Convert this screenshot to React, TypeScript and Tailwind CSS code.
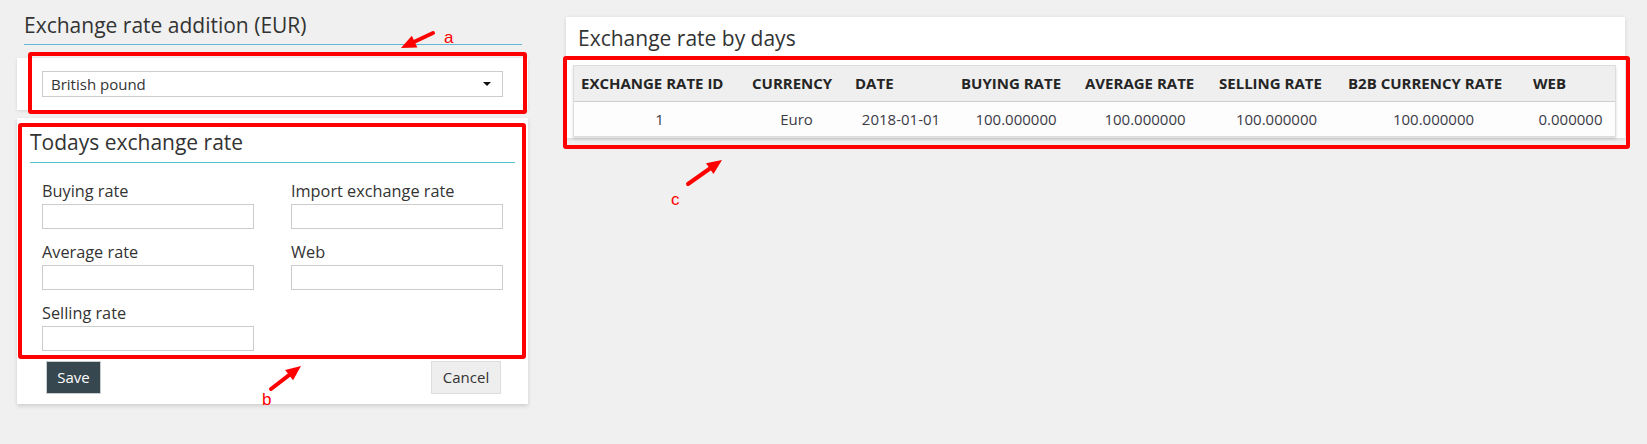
import React from "react";

type ArrowProps = { x1: number; y1: number; x2: number; y2: number };

function Arrow({ x1, y1, x2, y2 }: ArrowProps) {
  const dx = x2 - x1;
  const dy = y2 - y1;
  const len = Math.sqrt(dx * dx + dy * dy);
  const ux = dx / len;
  const uy = dy / len;
  const nx = -uy;
  const ny = ux;
  const headLen = 15;
  const headW = 6.5;
  const bx = x2 - headLen * ux;
  const by = y2 - headLen * uy;
  const p1 = `${x2},${y2}`;
  const p2 = `${bx + headW * nx},${by + headW * ny}`;
  const p3 = `${bx - headW * nx},${by - headW * ny}`;
  return (
    <g>
      <line x1={x1} y1={y1} x2={bx + ux * 2} y2={by + uy * 2} stroke="#ff0000" strokeWidth={4} strokeLinecap="round" />
      <polygon points={`${p1} ${p2} ${p3}`} fill="#ff0000" />
    </g>
  );
}

function Field({ label }: { label: string }) {
  return (
    <div className="flex flex-col">
      <div className="text-[16.3px] leading-[22px] text-[#333] mb-[2px]">{label}</div>
      <div className="h-[25px] w-full border border-[#cccccc] bg-white" />
    </div>
  );
}

const headers = [
  "EXCHANGE RATE ID",
  "CURRENCY",
  "DATE",
  "BUYING RATE",
  "AVERAGE RATE",
  "SELLING RATE",
  "B2B CURRENCY RATE",
  "WEB",
];

const values = ["1", "Euro", "2018-01-01", "100.000000", "100.000000", "100.000000", "100.000000", "0.000000"];

export default function App() {
  return (
    <div
      className="relative h-[444px] w-full overflow-hidden bg-[#f0f0f0]"
      style={{ fontFamily: '"Open Sans", "Noto Sans", sans-serif' }}
    >
      <div className="flex items-start pl-[17px]">
        {/* Left column */}
        <div className="w-[511px] flex flex-col">
          <div className="mx-[7px] mr-[6px] pt-[11px] pb-[4px] border-b border-[#62b8d0]">
            <div className="text-[21px] leading-[29px] text-[#333]">Exchange rate addition (EUR)</div>
          </div>

          <div className="mt-[13px] bg-white px-[25px] py-[13px] shadow-[0_1px_3px_rgba(0,0,0,0.12)]">
            <div className="h-[26px] border border-[#cccccc] flex items-center justify-between pl-[8px] pr-[11px]">
              <span className="text-[15px] text-[#333]">British pound</span>
              <span className="w-0 h-0 border-l-[4px] border-r-[4px] border-t-[4px] border-l-transparent border-r-transparent border-t-[#111]" />
            </div>
          </div>

          <div className="mt-[8px] bg-white pt-[10px] pb-[10px] shadow-[0_2px_4px_rgba(0,0,0,0.14)]">
            <div className="mx-[13px] pb-[5px] border-b border-[#58c2cc]">
              <div className="text-[21px] leading-[29px] text-[#333]">Todays exchange rate</div>
            </div>
            <div className="mt-[17px] px-[25px] grid grid-cols-[212px_212px] gap-x-[37px] gap-y-[12px]">
              <Field label="Buying rate" />
              <Field label="Import exchange rate" />
              <Field label="Average rate" />
              <Field label="Web" />
              <Field label="Selling rate" />
            </div>
            <div className="mt-[10px] pl-[29px] pr-[27px] flex justify-between">
              <button className="h-[33px] w-[55px] bg-[#37474f] border border-[#c8cdd0] text-white text-[15px]">
                Save
              </button>
              <button className="h-[33px] w-[70px] bg-[#eeeeee] border border-[#dddddd] text-[#333] text-[15px]">
                Cancel
              </button>
            </div>
          </div>
        </div>

        {/* Right panel */}
        <div className="ml-[38px] mt-[17px] w-[1059px] bg-white pt-[7px] pb-[1px] pl-[7px] pr-[9px] shadow-[0_1px_4px_rgba(0,0,0,0.12)]">
          <div className="pl-[5px] text-[21px] leading-[29px] text-[#333]">Exchange rate by days</div>
          <div className="mt-[12px] w-[1043px] border border-[#dddddd] shadow-[0_2px_3px_rgba(0,0,0,0.14)]">
            <div className="grid grid-cols-[171px_103px_106px_124px_134px_129px_185px_89px] h-[36px] bg-[#efefef] border-b border-[#cfcfcf] items-center">
              {headers.map((h) => (
                <div key={h} className="pl-[7px] text-[15px] font-bold text-[#252525] whitespace-nowrap">
                  {h}
                </div>
              ))}
            </div>
            <div className="grid grid-cols-[171px_103px_106px_124px_134px_129px_185px_89px] h-[34px] bg-[#fdfdfd] items-center">
              {values.map((v, i) => (
                <div key={i} className="text-center text-[15px] text-[#3b3b47] whitespace-nowrap">
                  {v}
                </div>
              ))}
            </div>
          </div>
        </div>
      </div>

      {/* Annotation boxes */}
      <div className="absolute left-[28px] top-[52px] w-[499px] h-[62px] border-[4px] border-[#ff0000] rounded-[3px] pointer-events-none" />
      <div className="absolute left-[18px] top-[123px] w-[508px] h-[236px] border-[4px] border-[#ff0000] rounded-[3px] pointer-events-none" />
      <div className="absolute left-[563px] top-[56px] w-[1067px] h-[93px] border-[4px] border-[#ff0000] rounded-[3px] pointer-events-none" />

      <svg className="absolute left-0 top-0 pointer-events-none" width={1647} height={444}>
        <Arrow x1={433} y1={33} x2={401} y2={48} />
        <Arrow x1={271} y1={389} x2={301} y2={366} />
        <Arrow x1={688} y1={184} x2={722} y2={160} />
        <text x={444} y={43} fill="#ff0000" fontSize={17} fontFamily="Liberation Sans, sans-serif">a</text>
        <text x={262} y={405} fill="#ff0000" fontSize={17} fontFamily="Liberation Sans, sans-serif">b</text>
        <text x={671} y={205} fill="#ff0000" fontSize={17} fontFamily="Liberation Sans, sans-serif">c</text>
      </svg>
    </div>
  );
}
